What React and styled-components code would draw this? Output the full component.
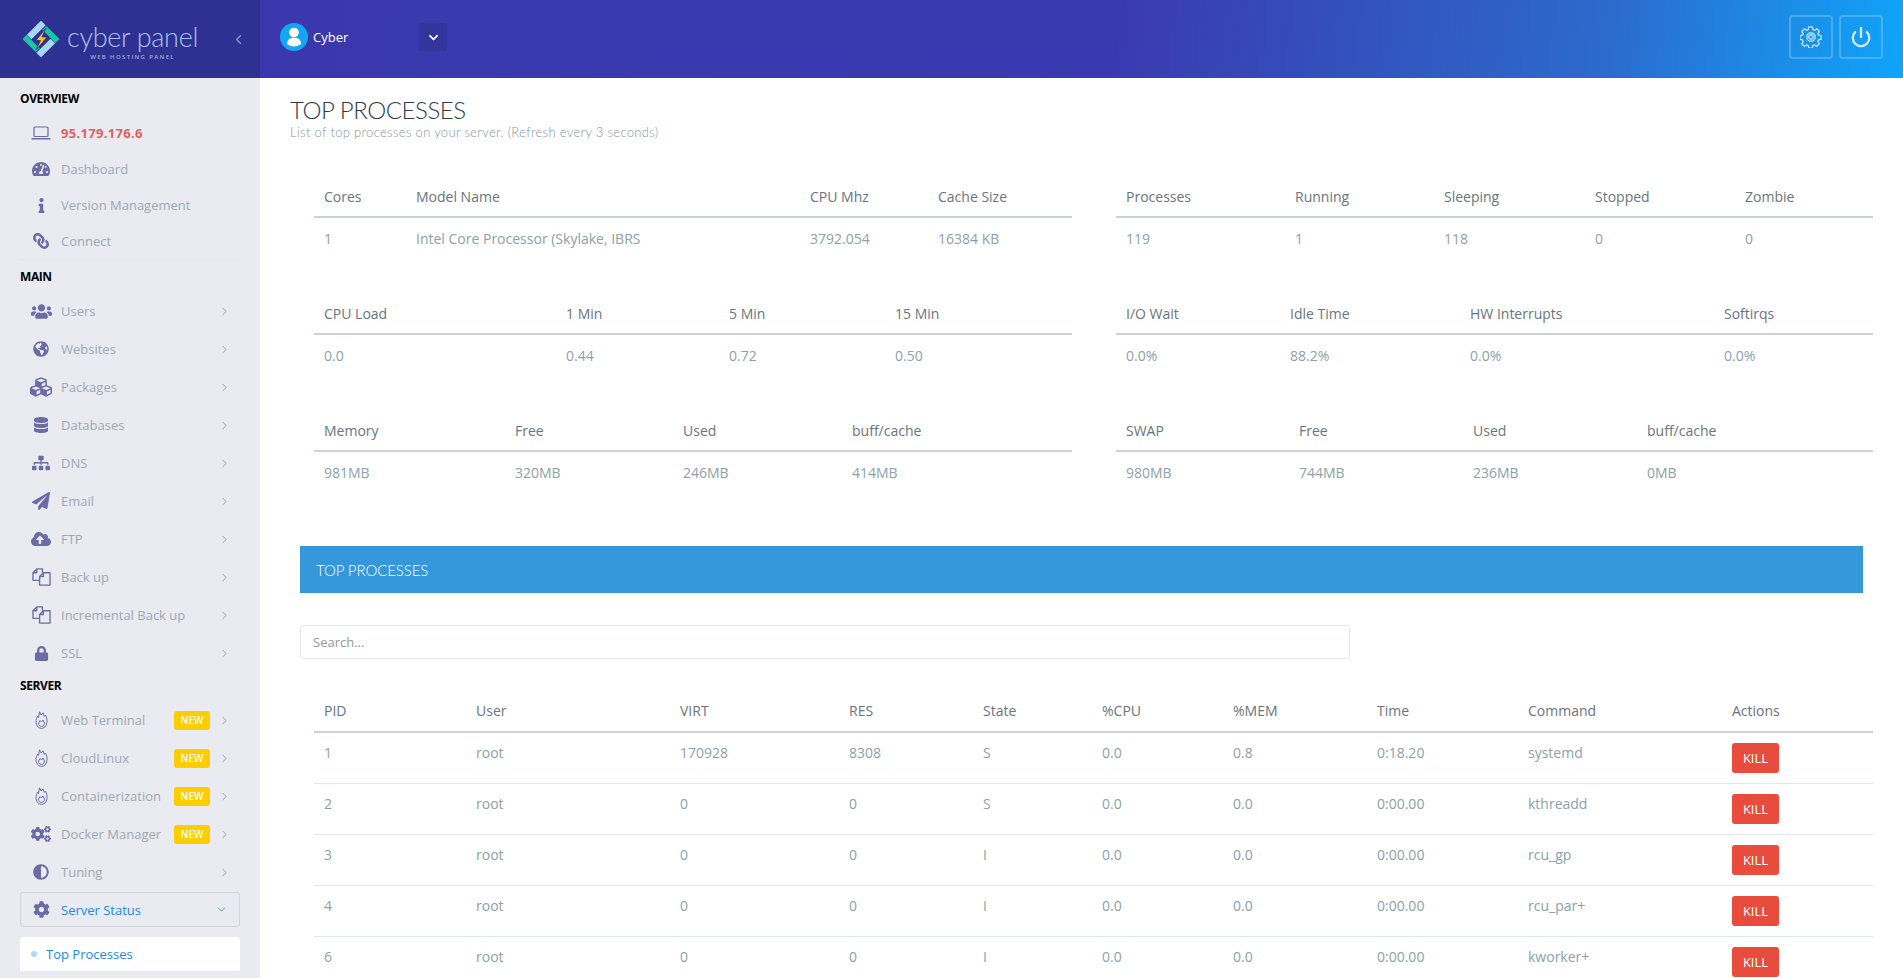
import React from 'react';
import styled, { createGlobalStyle } from 'styled-components';
import {
  FaTachometerAlt, FaInfo, FaLink, FaUsers, FaGlobeAmericas, FaCubes, FaDatabase, FaSitemap,
  FaPaperPlane, FaCloudUploadAlt, FaLock, FaCogs, FaAdjust, FaCog,
} from 'react-icons/fa';
import { ChevronRight, ChevronDown, ChevronLeft, Power } from 'lucide-react';

const GlobalStyle = createGlobalStyle`
  html, body {
    margin: 0;
    height: 100%;
    overflow: hidden;
    background: #fff;
    font-family: "Open Sans", "Liberation Sans", sans-serif;
    font-size: 13px;
  }
  * { box-sizing: border-box; }
`;

const Page = styled.div`
  height: 978px;
  overflow: hidden;
  display: flex;
  flex-direction: column;
`;

const Header = styled.header`
  height: 78px;
  flex: none;
  display: flex;
`;

const Brand = styled.div`
  width: 260px;
  flex: none;
  background: #2f3192;
  display: flex;
  align-items: center;
  padding: 0 14px 0 23px;
`;

const BrandText = styled.div`
  margin-left: 8px;
  display: flex;
  flex-direction: column;
  align-items: center;
  color: #a9c5ea;
`;

const BrandName = styled.span`
  font-family: Lato, sans-serif;
  font-weight: 300;
  font-size: 27px;
  line-height: 32px;
  letter-spacing: -0.3px;
  margin-top: 3px;
  white-space: nowrap;
`;

const BrandSub = styled.span`
  font-size: 6px;
  line-height: 8px;
  letter-spacing: 1.35px;
  font-weight: 600;
  color: #a5a9d8;
  white-space: nowrap;
`;

const Collapse = styled.span`
  margin-left: auto;
  color: #8f93c9;
  display: flex;
`;

const TopBar = styled.div`
  flex: 1;
  display: flex;
  align-items: center;
  padding: 0 20px 0 20px;
  background: linear-gradient(99deg, #3b38ad 0%, #3a3ab0 52%, #2c6bcd 82%, #0fa5fa 100%);
`;

const UserBlock = styled.div`
  display: flex;
  align-items: center;
  width: 139px;
  margin-top: -4px;
  color: #fff;
`;

const Avatar = styled.svg`
  width: 28px;
  height: 28px;
  margin-right: 5px;
`;

const MenuToggle = styled.button`
  width: 28px;
  height: 28px;
  margin-top: -4px;
  border: 0;
  padding: 0;
  border-radius: 3px;
  background: #33349c;
  color: #fff;
  display: flex;
  align-items: center;
  justify-content: center;
`;

const TopActions = styled.div`
  margin-left: auto;
  display: flex;
  gap: 6px;
  margin-top: -4px;
`;

const TopAction = styled.button`
  width: 44px;
  height: 44px;
  padding: 0;
  background: transparent;
  border: 2px solid rgba(255, 255, 255, 0.22);
  border-radius: 4px;
  color: #cfeafd;
  display: flex;
  align-items: center;
  justify-content: center;
`;

const Body = styled.div`
  flex: 1;
  display: flex;
  min-height: 0;
`;

const Sidebar = styled.aside`
  width: 260px;
  flex: none;
  background: #e9ebf1;
  padding: 0 20px;
  overflow: hidden;
`;

const GroupLabel = styled.div`
  height: 21px;
  line-height: 21px;
  margin-top: ${p => p.$top}px;
  margin-bottom: ${p => p.$bottom}px;
  font-size: 12px;
  font-weight: 700;
  letter-spacing: -0.4px;
  color: #000;
`;

const Divider = styled.div`
  height: 1px;
  background: #dfe8f1;
`;

const NavItem = styled.div`
  height: ${p => p.$h || 38}px;
  display: flex;
  align-items: center;
  padding: 0 9px 0 6px;
  color: #a0a8b6;
`;

const NavIcon = styled.span`
  width: 30px;
  margin-right: 5px;
  flex: none;
  display: flex;
  justify-content: center;
  color: #6c6ba6;
  transform: ${p => (p.$flip ? 'scaleX(-1)' : 'none')};
`;

const NavText = styled.span`
  white-space: nowrap;
`;

const IpText = styled(NavText)`
  color: #e05f63;
  font-weight: 700;
  letter-spacing: 0.3px;
`;

const Badge = styled.span`
  margin-left: auto;
  width: 36px;
  height: 19px;
  border-radius: 3px;
  background: #ffcc00;
  color: #fff;
  font-size: 10px;
  font-weight: 600;
  line-height: 19px;
  text-align: center;
`;

const Chevron = styled.span`
  margin-left: ${p => (p.$afterBadge ? '8px' : 'auto')};
  color: #8c93a0;
  display: flex;
`;

const ActiveItem = styled.div`
  height: 35px;
  margin-top: 1px;
  display: flex;
  align-items: center;
  padding: 0 11px 0 5px;
  border: 1px solid #d2d6de;
  border-radius: 3px;
  color: #1e88e5;
`;

const ActiveChevron = styled.span`
  margin-left: auto;
  display: flex;
`;

const SubPanel = styled.div`
  margin-top: 10px;
  border: 1px solid #fff;
  border-bottom: 0;
  border-radius: 3px 3px 0 0;
`;

const SubItem = styled.div`
  height: 33px;
  display: flex;
  align-items: center;
  padding: 0 0 2px 10px;
  background: #fff;
  color: #1e88e5;
`;

const SubDot = styled.span`
  width: 6px;
  height: 6px;
  border-radius: 50%;
  margin-right: 9px;
  background: #b3d7f5;
`;

const Main = styled.main`
  flex: 1;
  min-width: 0;
  background: #fff;
`;

const PageTitle = styled.h1`
  margin: 20px 0 0 30px;
  font-family: Lato, sans-serif;
  font-weight: 300;
  font-size: 24px;
  line-height: 24px;
  letter-spacing: -0.45px;
  color: #2f3a46;
`;

const PageSub = styled.p`
  margin: 0 0 0 30px;
  font-family: Lato, sans-serif;
  font-weight: 300;
  font-size: 13px;
  line-height: 20px;
  letter-spacing: 0.32px;
  color: #87939e;
`;

const StatsGrid = styled.div`
  margin-top: 34px;
  padding: 0 30px 0 54px;
  display: grid;
  grid-template-columns: 1fr 1fr;
  column-gap: 44px;
  row-gap: 35px;
`;

const Table = styled.table`
  width: 100%;
  table-layout: fixed;
  border-collapse: separate;
  border-spacing: 0;
  font-size: 14px;
`;

const Col = styled.col`
  width: ${p => p.$w}px;
`;

const Th = styled.th`
  padding: 10px;
  line-height: 20px;
  font-weight: 400;
  text-align: left;
  color: #6a747d;
  border-bottom: 2px solid #cdd2d9;
  white-space: nowrap;
`;

const Td = styled.td`
  padding: 10px;
  line-height: 20px;
  color: #8da0aa;
  vertical-align: top;
  white-space: nowrap;
  border-top: ${p => (p.$lined ? '1px solid #dfe8f1' : '0')};
`;

const StatTh = styled(Th)`
  padding: 11px 10px 9px;
`;

const StatTd = styled(Td)`
  padding: 11px 10px 9px;
`;

const Banner = styled.div`
  margin: 54px 40px 0;
  height: 47px;
  padding-left: 16px;
  display: flex;
  align-items: center;
  background: #3498db;
  color: #fff;
  font-family: Lato, sans-serif;
  font-weight: 300;
  font-size: 15px;
  letter-spacing: -0.1px;
`;

const SearchInput = styled.input`
  display: block;
  margin: 32px 0 0 40px;
  width: 1050px;
  height: 34px;
  padding: 0 12px;
  border: 1px solid #dfe8f1;
  border-radius: 3px;
  font: inherit;
  font-size: 13px;
  color: #555;
  &::placeholder {
    color: #999;
  }
`;

const ProcessWrap = styled.div`
  margin-top: 32px;
  padding: 0 30px 0 54px;
`;

const KillButton = styled.button`
  display: block;
  width: 47px;
  height: 30px;
  padding: 0;
  border: 0;
  border-radius: 3px;
  background: #e74c3c;
  color: #fff;
  font: inherit;
  font-size: 13px;
`;

const LogoMark = () => (
  <svg width="36" height="36" viewBox="0 0 36 36" style={{ flex: 'none' }}>
    <g transform="rotate(45 18 18)">
      <rect x="5" y="5" width="6.5" height="20" fill="#a9d6f3" />
      <rect x="24.5" y="11" width="6.5" height="20" fill="#a9d6f3" />
      <rect x="12.5" y="5" width="18.5" height="5.5" fill="#17c7a6" />
      <rect x="5" y="25.5" width="18.5" height="5.5" fill="#17c7a6" />
    </g>
    <polygon points="23,7 13,19.5 17.5,19.5 13,29 24,16 19,16" fill="#f9c621" stroke="#2f3192" strokeWidth="0.8" />
  </svg>
);

const LaptopIcon = () => (
  <svg width="20" height="14" viewBox="0 0 20 14">
    <rect x="3" y="1" width="14" height="9.5" rx="1" fill="none" stroke="currentColor" strokeWidth="1.2" />
    <rect x="0.5" y="12" width="19" height="1.6" rx="0.5" fill="currentColor" />
  </svg>
);

const FlameIcon = () => (
  <svg width="13" height="18" viewBox="0 0 12 18" fill="none" stroke="currentColor" strokeWidth="1" strokeLinejoin="round">
    <path d="M4 .8l1.600 3.200 1.900-2.200 1.300 3.700 1.200-1.500c1.500 3 1.700 5 1.500 7.500-.3 3.500-2.700 5.900-5.500 5.900s-5.200-2.400-5.500-5.900c-.2-3 1-5 1.700-6.500l.8 1.500z" />
    <path d="M3 12l1.500-2.500 1.500 1.500 1.500-2 1.500 3c0 2-1.500 3.500-3 3.500s-3-1.500-3-3.500z" />
  </svg>
);

const FilesIcon = () => (
  <svg width="19" height="18" viewBox="0 0 20 19" fill="none" stroke="currentColor" strokeWidth="1.4" strokeLinejoin="round">
    <path d="M8 13H1V5l4-4h6v4" />
    <path d="M5 1v4H1" />
    <path d="M8 9l4-4h7v13H8z" />
    <path d="M12 5v4H8" />
  </svg>
);

const GearOutline = () => (
  <svg width="22" height="22" viewBox="0 0 24 24" fill="none" stroke="currentColor" strokeWidth="1.3" strokeLinejoin="round">
    <path d="M10 2.500h4l.6 2.900 1.700.7 2.500-1.600 2.800 2.800-1.600 2.500.7 1.700 2.800.6v4l-2.800.6-.7 1.700 1.600 2.500-2.800 2.800-2.500-1.600-1.700.7-.6 2.900h-4l-.6-2.900-1.700-.7-2.500 1.600-2.800-2.800 1.600-2.500-.7-1.700-2.800-.6v-4l2.800-.6.7-1.700-1.600-2.500 2.800-2.800 2.500 1.600 1.700-.7z" transform="translate(-0.5 -1.500)" />
    <circle cx="12" cy="12" r="4.600" />
    <circle cx="12" cy="12" r="2.400" />
  </svg>
);

const overview = [
  { icon: <FaTachometerAlt size={18} />, label: 'Dashboard' },
  { icon: <FaInfo size={15} />, label: 'Version Management' },
  { icon: <FaLink size={16} />, label: 'Connect', flip: true },
];

const mainItems = [
  { icon: <FaUsers size={21} />, label: 'Users' },
  { icon: <FaGlobeAmericas size={16} />, label: 'Websites' },
  { icon: <FaCubes size={22} />, label: 'Packages' },
  { icon: <FaDatabase size={16} />, label: 'Databases' },
  { icon: <FaSitemap size={18} />, label: 'DNS' },
  { icon: <FaPaperPlane size={18} />, label: 'Email' },
  { icon: <FaCloudUploadAlt size={20} />, label: 'FTP' },
  { icon: <FilesIcon />, label: 'Back up' },
  { icon: <FilesIcon />, label: 'Incremental Back up' },
  { icon: <FaLock size={15} />, label: 'SSL' },
];

const serverItems = [
  { icon: <FlameIcon />, label: 'Web Terminal', isNew: true },
  { icon: <FlameIcon />, label: 'CloudLinux', isNew: true },
  { icon: <FlameIcon />, label: 'Containerization', isNew: true },
  { icon: <FaCogs size={20} />, label: 'Docker Manager', isNew: true },
  { icon: <FaAdjust size={16} />, label: 'Tuning' },
];

const leftTables = [
  { widths: [92, 394, 128, 144], head: ['Cores', 'Model Name', 'CPU Mhz', 'Cache Size'], row: ['1', 'Intel Core Processor (Skylake, IBRS', '3792.054', '16384 KB'] },
  { widths: [242, 163, 166, 187], head: ['CPU Load', '1 Min', '5 Min', '15 Min'], row: ['0.0', '0.44', '0.72', '0.50'] },
  { widths: [191, 168, 169, 230], head: ['Memory', 'Free', 'Used', 'buff/cache'], row: ['981MB', '320MB', '246MB', '414MB'] },
];

const rightTables = [
  { widths: [169, 149, 151, 150, 138], head: ['Processes', 'Running', 'Sleeping', 'Stopped', 'Zombie'], row: ['119', '1', '118', '0', '0'] },
  { widths: [164, 180, 254, 159], head: ['I/O Wait', 'Idle Time', 'HW Interrupts', 'Softirqs'], row: ['0.0%', '88.2%', '0.0%', '0.0%'] },
  { widths: [173, 174, 174, 236], head: ['SWAP', 'Free', 'Used', 'buff/cache'], row: ['980MB', '744MB', '236MB', '0MB'] },
];

const processWidths = [152, 204, 169, 134, 119, 131, 144, 151, 204, 151];
const processHead = ['PID', 'User', 'VIRT', 'RES', 'State', '%CPU', '%MEM', 'Time', 'Command', 'Actions'];
const processes = [
  ['1', 'root', '170928', '8308', 'S', '0.0', '0.8', '0:18.20', 'systemd'],
  ['2', 'root', '0', '0', 'S', '0.0', '0.0', '0:00.00', 'kthreadd'],
  ['3', 'root', '0', '0', 'I', '0.0', '0.0', '0:00.00', 'rcu_gp'],
  ['4', 'root', '0', '0', 'I', '0.0', '0.0', '0:00.00', 'rcu_par+'],
  ['6', 'root', '0', '0', 'I', '0.0', '0.0', '0:00.00', 'kworker+'],
];

const StatTable = ({ widths, head, row }) => (
  <Table>
    <colgroup>
      {widths.map((w, i) => <Col key={i} $w={w} />)}
    </colgroup>
    <thead>
      <tr>{head.map(h => <StatTh key={h}>{h}</StatTh>)}</tr>
    </thead>
    <tbody>
      <tr>{row.map((c, i) => <StatTd key={i}>{c}</StatTd>)}</tr>
    </tbody>
  </Table>
);

const SideRow = ({ item, h, chevron }) => (
  <NavItem $h={h}>
    <NavIcon $flip={item.flip}>{item.icon}</NavIcon>
    <NavText>{item.label}</NavText>
    {item.isNew && <Badge>NEW</Badge>}
    {chevron && (
      <Chevron $afterBadge={item.isNew}>
        <ChevronRight size={13} strokeWidth={1.5} />
      </Chevron>
    )}
  </NavItem>
);

export default function App() {
  return (
    <Page>
      <GlobalStyle />
      <Header>
        <Brand>
          <LogoMark />
          <BrandText>
            <BrandName>cyber panel</BrandName>
            <BrandSub>WEB HOSTING PANEL</BrandSub>
          </BrandText>
          <Collapse><ChevronLeft size={15} strokeWidth={2.2} /></Collapse>
        </Brand>
        <TopBar>
          <UserBlock>
            <Avatar viewBox="0 0 28 28">
              <circle cx="14" cy="14" r="14" fill="#12a6f5" />
              <circle cx="14" cy="9.5" r="4.8" fill="#fff" />
              <path d="M7 21c0-4.200 2.600-6.200 7-6.200s7 2 7 6.200c-1.800 1.600-4.200 2.400-7 2.400s-5.200-.8-7-2.400z" fill="#fff" />
            </Avatar>
            Cyber
          </UserBlock>
          <MenuToggle aria-label="User menu"><ChevronDown size={15} strokeWidth={2.6} /></MenuToggle>
          <TopActions>
            <TopAction aria-label="Settings"><GearOutline /></TopAction>
            <TopAction aria-label="Log out"><Power size={22} strokeWidth={2.6} /></TopAction>
          </TopActions>
        </TopBar>
      </Header>
      <Body>
        <Sidebar>
          <GroupLabel $top={10} $bottom={6}>OVERVIEW</GroupLabel>
          <NavItem $h={36}>
            <NavIcon><LaptopIcon /></NavIcon>
            <IpText>95.179.176.6</IpText>
          </NavItem>
          {overview.map(item => <SideRow key={item.label} item={item} h={36} />)}
          <Divider />
          <GroupLabel $top={6} $bottom={5}>MAIN</GroupLabel>
          {mainItems.map(item => <SideRow key={item.label} item={item} chevron />)}
          <GroupLabel $top={3} $bottom={5}>SERVER</GroupLabel>
          {serverItems.map(item => <SideRow key={item.label} item={item} chevron />)}
          <ActiveItem>
            <NavIcon><FaCog size={17} /></NavIcon>
            <NavText>Server Status</NavText>
            <ActiveChevron><ChevronDown size={13} strokeWidth={1.5} /></ActiveChevron>
          </ActiveItem>
          <SubPanel>
            <SubItem><SubDot />Top Processes</SubItem>
          </SubPanel>
        </Sidebar>
        <Main>
          <PageTitle>TOP PROCESSES</PageTitle>
          <PageSub>List of top processes on your server. (Refresh every 3 seconds)</PageSub>
          <StatsGrid>
            {leftTables.map((t, i) => (
              <React.Fragment key={t.head[0]}>
                <StatTable {...t} />
                <StatTable {...rightTables[i]} />
              </React.Fragment>
            ))}
          </StatsGrid>
          <Banner>TOP PROCESSES</Banner>
          <SearchInput placeholder="Search..." />
          <ProcessWrap>
            <Table>
              <colgroup>
                {processWidths.map((w, i) => <Col key={i} $w={w} />)}
              </colgroup>
              <thead>
                <tr>{processHead.map(h => <Th key={h}>{h}</Th>)}</tr>
              </thead>
              <tbody>
                {processes.map((row, r) => (
                  <tr key={row[0]}>
                    {row.map((c, i) => <Td key={i} $lined={r > 0}>{c}</Td>)}
                    <Td $lined={r > 0}><KillButton>KILL</KillButton></Td>
                  </tr>
                ))}
              </tbody>
            </Table>
          </ProcessWrap>
        </Main>
      </Body>
    </Page>
  );
}
